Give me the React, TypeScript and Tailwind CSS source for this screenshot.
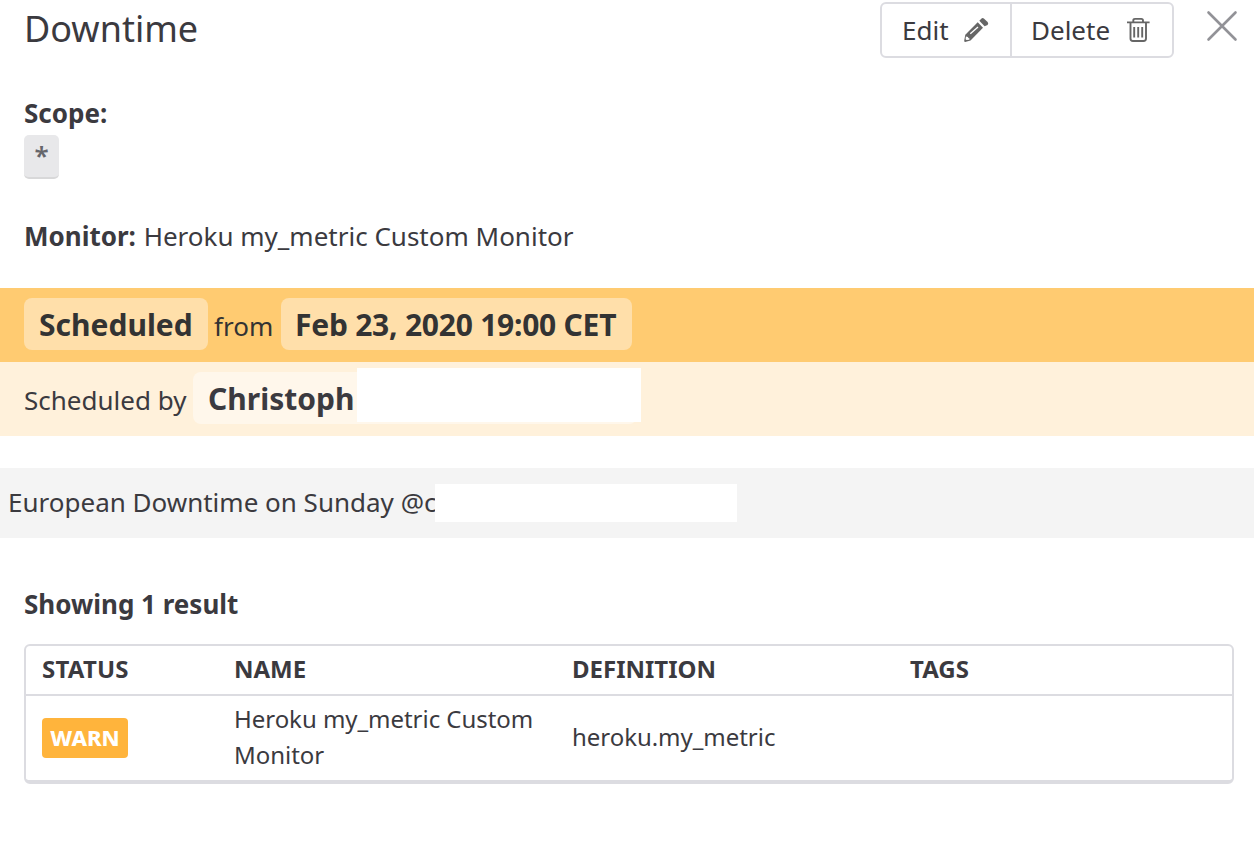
import React from 'react';

function PencilIcon() {
  return (
    <svg width="26" height="26" viewBox="0 0 26 26" fill="#666">
      <path d="M13.700 5.300L19 10.700L6.500 23.500L1.200 24.900Q0 25 .2 23.800L1.300 17.800Z" />
      <path d="M15.300 3.700L17.300 1.700Q18.700 .4 20.100 1.700L23.600 5.100Q24.900 6.500 23.600 7.900L20.600 9.300Z" />
      <path d="M6.300 16.700L14 10" stroke="#fff" strokeWidth="1.300" />
      <path d="M1.900 19.500L4 19.900L4.300 21.100L5.500 21.500L5.300 22.700L2.500 23L1.600 22.200Z" fill="#fff" />
    </svg>
  );
}

function TrashIcon() {
  return (
    <svg width="23" height="26" viewBox="0 0 23 26" fill="none" stroke="#666" strokeWidth="1.900">
      <path d="M0 5.400H22.600M6.300 5V3.500Q6.300 1.900 8 1.900H14.300Q16 1.900 16 3.500V5M3.500 5.400V21.500Q3.500 24 6 24H16.500Q19 24 19 21.500V5.400" />
      <path d="M7.200 10V20.500M11.200 10V20.500M15.200 10V20.500" />
    </svg>
  );
}

export default function App() {
  return (
    <div className="flex h-[844px] w-[1254px] flex-col overflow-hidden bg-white font-['Noto_Sans',sans-serif] text-[26px] leading-[36px] text-[#3b3a3f]">
      <header className="flex h-[58px] items-start pl-6">
        <h1 className="pt-[4px] text-[36px] leading-[50px]">Downtime</h1>
        <div className="mt-[2px] ml-auto flex h-[56px] rounded-md border-2 border-[#dcdce1]">
          <button className="flex w-[128px] items-center pl-5"><span className="w-[62px] text-left">Edit</span><PencilIcon /></button>
          <button className="flex w-[162px] items-center border-l-2 border-[#dcdce1] pl-[19px]"><span className="w-[96px] text-left">Delete</span><TrashIcon /></button>
        </div>
        <svg className="mt-[10px] mr-[16px] ml-[32px]" width="32" height="32" viewBox="0 0 32 32" stroke="#929297" strokeWidth="2.600" strokeLinecap="round"><path d="M2.500 2.500L29.500 29.500M29.500 2.500L2.500 29.500" /></svg>
      </header>
      <section className="h-[230px] pt-[37px] pl-6">
        <div className="font-bold">Scope:</div>
        <div className="mt-[4px] h-[44px] w-[35px] rounded-[5px] border-b-2 border-[#d8d8d9] bg-[#e8e8ea] text-center leading-[40px] font-semibold text-[#66666b]">*</div>
        <div className="mt-[39px]"><b>Monitor:</b><span className="pl-px"> Heroku my_metric Custom Monitor</span></div>
      </section>
      <section className="flex h-[74px] items-center bg-[#ffcb71] pb-[2px] pl-6 text-[#333]">
        <span className="flex h-[52px] w-[184px] items-center rounded-lg bg-[#ffdfaa] pt-[2px] pl-[15px] text-[30px] font-bold">Scheduled</span>
        <span className="w-[73px] pt-[4px] pl-[6px]">from</span>
        <span className="flex h-[52px] w-[351px] items-center rounded-lg bg-[#ffdfaa] pt-[2px] pl-[14px] text-[30px] font-bold tracking-[-0.24px] whitespace-nowrap">Feb 23, 2020 19:00 CET</span>
      </section>
      <section className="flex h-[74px] items-center bg-[#fff1db] pb-[2px] pl-6">
        <span className="w-[169px] pt-[4px]">Scheduled by</span>
        <div className="flex h-[52px] w-[444px] rounded-lg bg-[#fff7eb]">
          <span className="flex w-[164px] shrink-0 items-center pt-[2px] pl-[15px] text-[30px] font-bold">Christoph</span>
          <span className="-mt-[4px] h-[54px] w-[284px] shrink-0 bg-white" />
        </div>
      </section>
      <section className="mt-8 flex h-[70px] items-center bg-[#f4f4f4] pl-2">
        <span className="w-[427px] overflow-hidden pb-[2px] whitespace-nowrap">European Downtime on Sunday @c</span>
        <span className="h-[38px] w-[302px] bg-white" />
      </section>
      <h2 className="mt-[48px] ml-6 text-[26px] leading-[36px] font-bold">Showing 1 result</h2>
      <div className="mt-[22px] ml-6 h-[140px] w-[1210px] rounded-md border-2 border-b-4 border-[#dcdce1] text-[24px]">
        <div className="grid h-[50px] grid-cols-[192px_338px_338px_1fr] items-center border-b-2 border-[#dcdce1] pb-[2px] pl-4 font-bold"><span className="tracking-[0.2px]">STATUS</span><span>NAME</span><span>DEFINITION</span><span>TAGS</span></div>
        <div className="grid h-[84px] grid-cols-[192px_338px_338px_1fr] items-center pl-4">
          <span className="flex h-10 w-[86px] items-center justify-center rounded bg-[#ffb43c] pb-[2px] text-[22px] font-extrabold text-white">WARN</span>
          <span className="w-[322px] pb-[2px] tracking-[-0.04px]">Heroku my_metric Custom Monitor</span><span className="pb-[2px] tracking-[-0.04px]">heroku.my_metric</span>
        </div>
      </div>
    </div>
  );
}
